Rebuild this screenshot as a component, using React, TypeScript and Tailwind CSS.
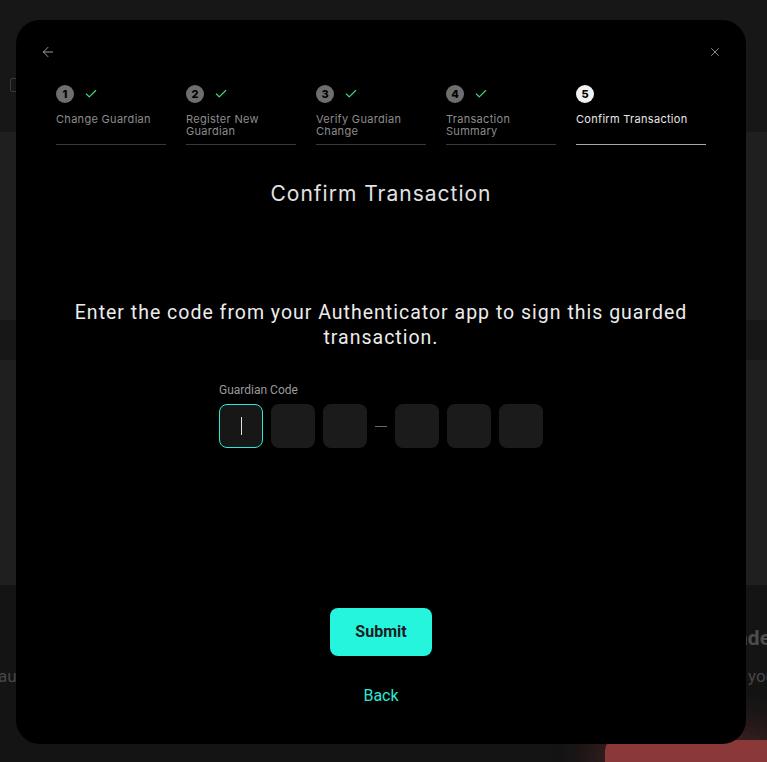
import { ArrowLeft, X, Check } from 'lucide-react';

const steps = [
  { n: 1, label: 'Change Guardian', done: true },
  { n: 2, label: 'Register New Guardian', done: true },
  { n: 3, label: 'Verify Guardian Change', done: true },
  { n: 4, label: 'Transaction Summary', done: true },
  { n: 5, label: 'Confirm Transaction', done: false },
];

function Backdrop() {
  return (
    <div className="min-h-[762px] flex flex-col bg-[#141414] font-['Roboto',sans-serif] overflow-hidden">
      {/* header */}
      <div className="h-[132px] bg-[#171717] px-[10px] pt-[78px]">
        <div className="w-[14px] h-[14px] border border-[#3a3a3a] rounded-[2px]" />
      </div>
      <div className="h-[188px] bg-[#1f1f1f]" />
      <div className="h-[40px] bg-[#171717]" />
      <div className="h-[225px] bg-[#1f1f1f]" />
      {/* footer */}
      <div className="flex-1 flex flex-col pt-[40px]">
        <div className="flex justify-end whitespace-nowrap text-[21px] leading-[26px] font-bold text-[#4d4d4d] -mr-[4px]">
          Upgrade
        </div>
        <div className="flex justify-between whitespace-nowrap text-[17px] leading-[22px] text-[#474747] mt-[14px] -ml-[2px] -mr-[8px]">
          <span>au</span>
          <span>you</span>
        </div>
        <div className="flex justify-end mt-[53px]">
          <div className="w-[162px] h-[30px] rounded-tl-[10px] bg-[#8a3838] shadow-[0_0_40px_10px_rgba(138,56,56,0.45)]" />
        </div>
      </div>
    </div>
  );
}

function Stepper() {
  return (
    <div className="flex gap-[20px]">
      {steps.map((s) => {
        const active = !s.done;
        return (
          <div
            key={s.n}
            className={
              active
                ? 'w-[130px] border-b border-[#a8a8a8] pb-[7px]'
                : 'w-[110px] border-b border-[#3a3a3a] pb-[7px]'
            }
          >
            <div className="flex items-center gap-[10px] h-[18px]">
              <div
                className={
                  active
                    ? 'w-[18px] h-[18px] rounded-full bg-[#f2f2f2] text-black text-[11px] font-extrabold flex items-center justify-center'
                    : 'w-[18px] h-[18px] rounded-full bg-[#6e6e6e] text-black text-[11px] font-extrabold flex items-center justify-center'
                }
              >
                {s.n}
              </div>
              {s.done && <Check size={14} strokeWidth={2} className="text-[#3fd97f]" />}
            </div>
            <div
              className={
                active
                  ? 'mt-[10px] h-[24px] text-[11px] leading-[12px] tracking-[0.3px] text-[#e8e8e8]'
                  : 'mt-[10px] h-[24px] text-[11px] leading-[12px] tracking-[0.3px] text-[#8c8c8c]'
              }
            >
              {s.label}
            </div>
          </div>
        );
      })}
    </div>
  );
}

function CodeBox({ focused }: { focused?: boolean }) {
  return (
    <div
      className={
        focused
          ? 'w-[44px] h-[44px] rounded-[8px] bg-[#171717] border border-[#2ee8d6] flex items-center justify-center'
          : 'w-[44px] h-[44px] rounded-[8px] bg-[#1b1b1b]'
      }
    >
      {focused && <div className="w-px h-[18px] bg-[#e0e0e0]" />}
    </div>
  );
}

export default function App() {
  return (
    <div className="relative">
      <Backdrop />

      {/* Modal */}
      <div className="absolute left-[16px] top-[20px] w-[730px] h-[724px] rounded-[24px] bg-black font-['Inter',sans-serif] px-[40px] pt-[24px] flex flex-col">
        <div className="flex items-center justify-between h-[16px] -mx-[16px]">
          <ArrowLeft size={16} strokeWidth={1.5} className="text-[#9a9a9a]" />
          <X size={14} strokeWidth={1.5} className="text-[#9a9a9a]" />
        </div>

        <div className="mt-[25px]">
          <Stepper />
        </div>

        <h2 className="mt-[35px] text-center text-[21px] leading-[28px] text-[#e2e2e2] tracking-[1px]">
          Confirm Transaction
        </h2>

        <p className="mt-[92px] text-center font-['Roboto',sans-serif] text-[19.5px] leading-[25px] tracking-[1px] text-[#ececec]">
          Enter the code from your Authenticator app to sign this guarded transaction.
        </p>

        <div className="mt-[32px] flex justify-center">
          <div className="flex flex-col">
            <label className="text-[12px] leading-[16px] text-[#9a9a9a] font-['Roboto',sans-serif]">Guardian Code</label>
            <div className="mt-[6px] flex items-center gap-[8px]">
              <CodeBox focused />
              <CodeBox />
              <CodeBox />
              <div className="w-[12px] h-px bg-[#6a6a6a]" />
              <CodeBox />
              <CodeBox />
              <CodeBox />
            </div>
          </div>
        </div>

        <div className="mt-[160px] flex flex-col items-center font-['Roboto',sans-serif]">
          <button className="w-[102px] h-[48px] rounded-[8px] bg-[#26f5de] text-[#1c1c1c] text-[16px] font-bold">
            Submit
          </button>
          <button className="mt-[28px] text-[16px] leading-[24px] text-[#2ee8d6]">Back</button>
        </div>
      </div>
    </div>
  );
}
